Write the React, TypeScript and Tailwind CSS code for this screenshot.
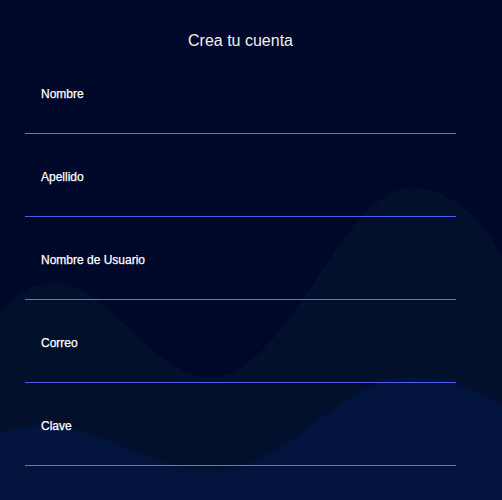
import React from "react";

const fields = [
  { label: "Nombre", line: "border-[#6a70d6]" },
  { label: "Apellido", line: "border-[#4b5cf2]" },
  { label: "Nombre de Usuario", line: "border-[#6a70d6]" },
  { label: "Correo", line: "border-[#4b5cf2]" },
  { label: "Clave", line: "border-[#6a70d6]" },
];

export default function App() {
  return (
    <div className="relative w-full h-screen overflow-hidden bg-[#00082a] font-['Liberation_Sans',Arial,sans-serif]">
      <svg
        className="absolute inset-0 w-full h-full"
        viewBox="0 0 502 500"
        preserveAspectRatio="none"
      >
        <path
          d="M0,312 C20,292 35,283 55,283 C110,283 150,377 210,377 C290,377 340,188 412,188 C455,188 485,225 502,257 L502,500 L0,500 Z"
          fill="#03102c"
        />
        <path
          d="M0,433 C15,427 25,425 40,425 C100,425 150,470 210,470 C290,470 340,377 410,377 C450,377 480,392 502,405 L502,500 L0,500 Z"
          fill="#02133e"
        />
      </svg>
      <div className="relative w-[431px] ml-[25px] pt-[29px]">
        <h1 className="text-center text-[16px] leading-[24px] text-[#eef0f6]">
          Crea tu cuenta
        </h1>
        <div className="mt-[34px] flex flex-col">
          {fields.map((f, i) => (
            <div key={f.label} className={i === 0 ? "" : "pt-[36px]"}>
              <div className="pl-[16px] text-[12px] leading-[14px] font-medium text-white [-webkit-text-stroke:0.25px_#ffffff]">
                {f.label}
              </div>
              <div className={`mt-[32px] border-b ${f.line}`} />
            </div>
          ))}
        </div>
      </div>
    </div>
  );
}
